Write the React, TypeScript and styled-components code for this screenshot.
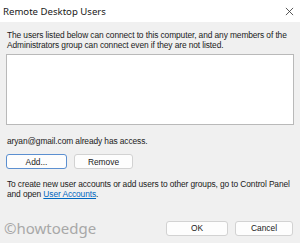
import * as React from 'react';
import styled, { createGlobalStyle } from 'styled-components';

const GlobalStyle = createGlobalStyle`
	html, body {
		margin: 0;
		padding: 0;
		background: #f0f0f0;
	}
	body {
		font-family: "Liberation Sans", Arial, sans-serif;
	}
`;

const SDialog = styled.div`
	width: 300px;
	height: 243px;
	display: flex;
	flex-direction: column;
	background: #f0f0f0;
	overflow: hidden;
	color: #1a1a1a;
`;

const STitleBar = styled.div`
	height: 22px;
	display: flex;
	align-items: center;
	justify-content: space-between;
	background: #ffffff;
	padding: 0 6px 0 3px;
	flex-shrink: 0;
`;

const STitle = styled.span`
	font-family: "Noto Sans", "Liberation Sans", sans-serif;
	font-size: 9.6px;
	color: #202020;
`;

const SClose = styled.svg`
	width: 9px;
	height: 9px;
`;

const SBody = styled.div`
	display: flex;
	flex-direction: column;
	padding: 8px 6px 0 6px;
	flex: 1;
`;

const SText = styled.p<{ $top?: number }>`
	margin: ${(p) => p.$top ?? 0}px 0 0 1px;
	font-size: 8.4px;
	line-height: 10px;
	color: #1a1a1a;
	white-space: nowrap;
	letter-spacing: -0.1px;
`;

const SList = styled.div`
	margin-top: 4px;
	height: 69px;
	background: #ffffff;
	border: 1px solid #b9b9b9;
`;

const SButtonRow = styled.div<{ $top: number }>`
	display: flex;
	gap: 7px;
	margin-top: ${(p) => p.$top}px;
`;

const SButton = styled.button<{ $primary?: boolean; $width: number }>`
	width: ${(p) => p.$width}px;
	height: 15px;
	padding: 0;
	box-sizing: border-box;
	font-family: "Liberation Sans", Arial, sans-serif;
	font-size: 8.4px;
	color: #1a1a1a;
	background: #fdfdfd;
	border: 1px solid ${(p) => (p.$primary ? '#5b8fd0' : '#d2d2d2')};
	border-radius: 3px;
`;

const SLink = styled.span`
	color: #0067c0;
	text-decoration: underline;
`;

const SFooter = styled.div`
	margin-top: auto;
	display: flex;
	align-items: center;
	justify-content: space-between;
	padding: 0 7px 5px 4px;
`;

const SWatermark = styled.span`
	font-size: 15px;
	color: #a8a8a8;
	font-family: "Noto Sans", "Liberation Sans", sans-serif;
`;

const App = () => {
	return (
		<SDialog>
			<GlobalStyle />
			<STitleBar>
				<STitle>Remote Desktop Users</STitle>
				<SClose viewBox="0 0 10 10">
					<path d="M1 1L9 9M9 1L1 9" stroke="#333" strokeWidth="0.9" fill="none" />
				</SClose>
			</STitleBar>
			<SBody>
				<SText>
					The users listed below can connect to this computer, and any members of the
					<br />
					Administrators group can connect even if they are not listed.
				</SText>
				<SList />
				<SText $top={11}>aryan@gmail.com already has access.</SText>
				<SButtonRow $top={8}>
					<SButton $primary $width={61}>Add...</SButton>
					<SButton $width={59}>Remove</SButton>
				</SButtonRow>
				<SText $top={10}>
					To create new user accounts or add users to other groups, go to Control Panel
					<br />
					and open <SLink>User Accounts</SLink>.
				</SText>
			</SBody>
			<SFooter>
				<SWatermark>©howtoedge</SWatermark>
				<SButtonRow $top={0}>
					<SButton $width={62}>OK</SButton>
					<SButton $width={58}>Cancel</SButton>
				</SButtonRow>
			</SFooter>
		</SDialog>
	);
};

export default App;
